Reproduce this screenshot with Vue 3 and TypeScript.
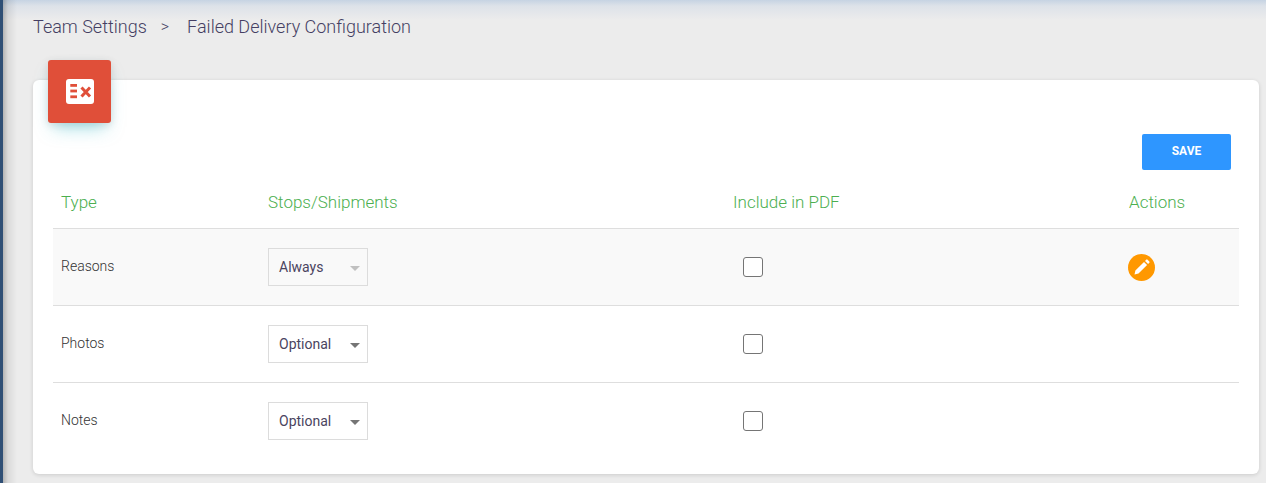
<script setup lang="ts">
interface Row { name: string; value: string; disabled: boolean; edit: boolean }
const rows: Row[] = [
  { name: 'Reasons', value: 'Always', disabled: true, edit: true },
  { name: 'Photos', value: 'Optional', disabled: false, edit: false },
  { name: 'Notes', value: 'Optional', disabled: false, edit: false },
]
</script>

<template>
  <div class="page">
    <div class="rail"></div>
    <main class="content">
      <nav class="crumbs">
        <span>Team Settings</span>
        <span class="sep">&gt;</span>
        <span>Failed Delivery Configuration</span>
      </nav>
      <section class="card">
        <div class="badge">
          <svg width="28" height="25" viewBox="0 0 28 25">
            <rect width="28" height="25" rx="3" fill="#fff" />
            <g fill="#e04f39">
              <rect x="4.300" y="5" width="6.700" height="2.800" />
              <rect x="4.300" y="10.600" width="6.700" height="2.800" />
              <rect x="4.300" y="16.400" width="6.700" height="2.800" />
            </g>
            <path d="M15.500 8.500l8.500 9M24 8.500l-8.500 9" stroke="#e04f39" stroke-width="3" fill="none" />
          </svg>
        </div>
        <div class="toolbar"><button class="save" type="button">SAVE</button></div>
        <div class="grid head">
          <div class="cell">Type</div>
          <div class="cell">Stops/Shipments</div>
          <div class="cell">Include in PDF</div>
          <div class="cell">Actions</div>
        </div>
        <div v-for="(r, i) in rows" :key="r.name" class="grid row" :class="{ odd: i === 0, last: i === rows.length - 1 }">
          <div class="cell name">{{ r.name }}</div>
          <div class="cell">
            <div class="select" :class="{ disabled: r.disabled }">
              <span>{{ r.value }}</span>
              <i class="caret"></i>
            </div>
          </div>
          <div class="cell check-cell"><span class="check"></span></div>
          <div class="cell action-cell">
            <span v-if="r.edit" class="edit">
              <svg width="27" height="27" viewBox="0 0 27 27">
                <circle cx="13.500" cy="13.500" r="13.500" fill="#ff9800" />
                <path d="M6.500 20.500l.9-4 8.600-8.600 3.100 3.100-8.600 8.600zM17 6.900l1.200-1.200a1 1 0 0 1 1.400 0l1.700 1.700a1 1 0 0 1 0 1.400L20.100 10z" fill="#fff" />
              </svg>
            </span>
          </div>
        </div>
      </section>
    </main>
  </div>
</template>

<style>
html, body { margin: 0; background: #ececec; }
</style>

<style scoped>
.page {
  display: flex;
  width: 1266px;
  height: 483px;
  overflow: hidden;
  background:
    linear-gradient(90deg, rgba(0, 0, 0, 0.24) 3px, rgba(0, 0, 0, 0.08) 8px, rgba(0, 0, 0, 0) 17px),
    linear-gradient(#c6d3e3 0, #dde2e9 6px, #ececec 20px);
  font-family: Roboto, sans-serif;
  position: relative;
}
.rail {
  width: 3px;
  flex: none;
  background: #2f4f75;
}
.content { flex: 1; padding: 0 7px 0 30px; }
.crumbs {
  height: 80px;
  box-sizing: border-box;
  padding-top: 15px;
  display: flex;
  gap: 14px;
  font-size: 18px;
  line-height: 24px;
  font-weight: 300;
  color: #453f63;
}
.crumbs .sep { margin-right: 4px; font-size: 16px; }
.card {
  position: relative;
  height: 394px;
  box-sizing: border-box;
  padding: 54px 20px 0;
  background: #fff;
  border-radius: 6px;
  box-shadow: 0 1px 4px rgba(0, 0, 0, 0.14);
}
.badge {
  position: absolute;
  left: 15px;
  top: -20px;
  width: 63px;
  height: 63px;
  display: flex;
  align-items: center;
  justify-content: center;
  background: #e04f39;
  border-radius: 3px;
  box-shadow: 0 10px 18px -6px rgba(60, 190, 205, 0.5), 0 2px 8px rgba(0, 0, 0, 0.12);
}
.toolbar { display: flex; justify-content: flex-end; padding-right: 8px; }
.save {
  width: 89px;
  height: 36px;
  padding: 0 0 2px;
  border: 0;
  border-radius: 2px;
  background: #2e96ff;
  color: #fff;
  font: 700 12px Roboto, sans-serif;
}
.grid {
  display: grid;
  grid-template-columns: 207px 465px 396px 118px;
}
.cell { padding-left: 8px; box-sizing: border-box; display: flex; align-items: center; }
.head {
  height: 59px;
  padding-top: 6px;
  box-sizing: border-box;
  border-bottom: 1px solid #dedede;
  font-size: 17px;
  font-weight: 300;
  color: #4caf50;
}
.row { height: 77px; box-sizing: border-box; border-bottom: 1px solid #dedede; }
.row.odd { background: #f9f9f9; }
.row.last { height: 76px; border-bottom: 0; }
.name { font-size: 14px; font-weight: 300; color: #333; padding-bottom: 2px; }
.select {
  width: 100px;
  height: 38px;
  box-sizing: border-box;
  border: 1px solid #dcdcdc;
  padding: 0 7px 0 10px;
  display: flex;
  align-items: center;
  justify-content: space-between;
  font-size: 14px;
  color: #4a4460;
  background: #fff;
}
.select.disabled { background: #f9f9f9; }
.caret {
  width: 0;
  height: 0;
  margin-top: 2px;
  border-left: 5px solid transparent;
  border-right: 5px solid transparent;
  border-top: 5px solid #757575;
}
.disabled .caret { border-top-color: #c0c0c0; }
.check-cell { padding-left: 18px; }
.check {
  width: 18px;
  height: 18px;
  border: 1.500px solid #757575;
  border-radius: 3px;
  background: #fff;
}
.action-cell { padding-left: 7px; }
.edit { display: flex; }
</style>
